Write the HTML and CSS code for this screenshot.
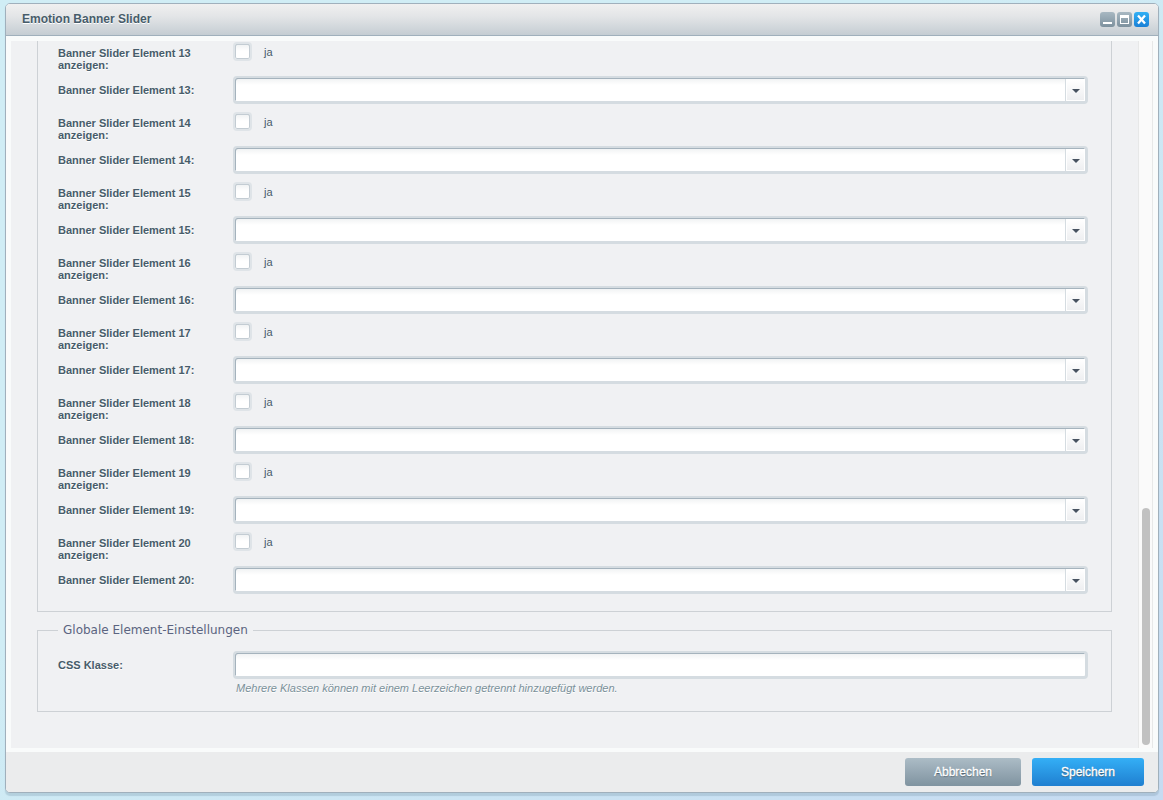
FILE: index.html
```html
<!DOCTYPE html>
<html lang="de">
<head>
  <meta charset="UTF-8">
  <title>Emotion Banner Slider</title>
  <meta name="viewport" content="width=device-width, initial-scale=1">
  <link rel="stylesheet" href="styles.css">
</head>
<body>
  <form class="window">
    <header class="window-header">
      <h1>Emotion Banner Slider</h1>
      <div class="tools">
        <button type="button" class="tool" aria-label="Minimieren">
          <svg width="15" height="15" viewBox="0 0 15 15"><path d="M3 10h9v2H3z" fill="#fff"/></svg>
        </button>
        <button type="button" class="tool" aria-label="Maximieren">
          <svg width="15" height="15" viewBox="0 0 15 15"><path fill-rule="evenodd" d="M3 3h9v9H3zM4 6v5h7V6z" fill="#fff"/></svg>
        </button>
        <button type="button" class="tool tool-close" aria-label="Schließen">
          <svg width="15" height="15" viewBox="0 0 15 15"><path d="M4 3.500l7 8M11 3.500l-7 8" stroke="#fff" stroke-width="2.300"/></svg>
        </button>
      </div>
    </header>

    <div class="window-body">
      <div class="content">
        <fieldset class="elements">
          <div class="row check-row">
            <label for="show13">Banner Slider Element 13 anzeigen:</label>
            <input type="checkbox" id="show13"><span>ja</span>
          </div>
          <div class="row">
            <label for="element13">Banner Slider Element 13:</label>
            <div class="combo"><select id="element13"></select></div>
          </div>
          <div class="row check-row">
            <label for="show14">Banner Slider Element 14 anzeigen:</label>
            <input type="checkbox" id="show14"><span>ja</span>
          </div>
          <div class="row">
            <label for="element14">Banner Slider Element 14:</label>
            <div class="combo"><select id="element14"></select></div>
          </div>
          <div class="row check-row">
            <label for="show15">Banner Slider Element 15 anzeigen:</label>
            <input type="checkbox" id="show15"><span>ja</span>
          </div>
          <div class="row">
            <label for="element15">Banner Slider Element 15:</label>
            <div class="combo"><select id="element15"></select></div>
          </div>
          <div class="row check-row">
            <label for="show16">Banner Slider Element 16 anzeigen:</label>
            <input type="checkbox" id="show16"><span>ja</span>
          </div>
          <div class="row">
            <label for="element16">Banner Slider Element 16:</label>
            <div class="combo"><select id="element16"></select></div>
          </div>
          <div class="row check-row">
            <label for="show17">Banner Slider Element 17 anzeigen:</label>
            <input type="checkbox" id="show17"><span>ja</span>
          </div>
          <div class="row">
            <label for="element17">Banner Slider Element 17:</label>
            <div class="combo"><select id="element17"></select></div>
          </div>
          <div class="row check-row">
            <label for="show18">Banner Slider Element 18 anzeigen:</label>
            <input type="checkbox" id="show18"><span>ja</span>
          </div>
          <div class="row">
            <label for="element18">Banner Slider Element 18:</label>
            <div class="combo"><select id="element18"></select></div>
          </div>
          <div class="row check-row">
            <label for="show19">Banner Slider Element 19 anzeigen:</label>
            <input type="checkbox" id="show19"><span>ja</span>
          </div>
          <div class="row">
            <label for="element19">Banner Slider Element 19:</label>
            <div class="combo"><select id="element19"></select></div>
          </div>
          <div class="row check-row">
            <label for="show20">Banner Slider Element 20 anzeigen:</label>
            <input type="checkbox" id="show20"><span>ja</span>
          </div>
          <div class="row">
            <label for="element20">Banner Slider Element 20:</label>
            <div class="combo"><select id="element20"></select></div>
          </div>
        </fieldset>

        <fieldset class="global">
          <legend>Globale Element-Einstellungen</legend>
          <div class="row">
            <label for="cssClass">CSS Klasse:</label>
            <div class="field">
              <input type="text" id="cssClass">
              <p class="help">Mehrere Klassen können mit einem Leerzeichen getrennt hinzugefügt werden.</p>
            </div>
          </div>
        </fieldset>
      </div>
      <div class="scrollbar"><div class="thumb"></div></div>
    </div>

    <footer class="window-footer">
      <button type="button" class="btn">Abbrechen</button>
      <button type="submit" class="btn btn-primary">Speichern</button>
    </footer>
  </form>
</body>
</html>
```
FILE: styles.css
```css
*, *::before, *::after {
  box-sizing: border-box;
}
body {
  margin: 0;
  padding: 3px 4px 7px 5px;
  min-height: 100vh;
  display: flex;
  background: linear-gradient(145deg, #d0edf5 40%, #c6dbf1);
  font-family: "Liberation Sans", Arial, sans-serif;
  font-size: 11px;
  line-height: 12px;
  color: #475c6a;
}
.window {
  flex: 1;
  display: flex;
  flex-direction: column;
  border: 1px solid #a0b0bc;
  border-radius: 5px;
  background: #f9fbfb;
  box-shadow: 0 3px 1px rgba(120, 150, 170, 0.3);
  overflow: hidden;
}
.window-header {
  display: flex;
  align-items: center;
  justify-content: space-between;
  height: 32px;
  padding: 0 9px 0 16px;
  border-bottom: 1px solid #a0b0bc;
  background: linear-gradient(#f0f0f0, #e3e5e7 40%, #c5cdd3);
}
h1 {
  margin: 0;
  padding-bottom: 2px;
  font-size: 12px;
  color: #475c6a;
  text-shadow: 0 1px 0 #fff;
}
.tools {
  display: flex;
  gap: 2px;
}
.tool {
  width: 15px;
  height: 15px;
  padding: 0;
  border: none;
  border-radius: 3px;
  background: linear-gradient(#a8b8c2, #7d919e);
}
.tool svg {
  display: block;
}
.tool-close {
  background: linear-gradient(#31b0f5, #1a80d6);
}

.window-body {
  flex: 1;
  display: flex;
  padding: 5px 5px 4px;
}
.content {
  flex: 1;
  padding: 0 26px;
  background: #f0f1f3;
}
fieldset {
  min-width: 0;
  margin: 0;
  padding: 0 23px 0 20px;
  border: 1px solid #cdd1d5;
}
.elements {
  border-top: none;
  padding-top: 1px;
  padding-bottom: 9px;
}
.global {
  margin-top: 11px;
  padding-bottom: 9px;
}
legend {
  padding: 0 5px;
  font-family: "DejaVu Sans", Verdana, sans-serif;
  font-size: 12px;
  line-height: 14px;
  color: #5b6480;
  margin-bottom: 14px;
}
.row {
  display: flex;
  align-items: flex-start;
  margin-bottom: 8px;
}
.row label {
  width: 175px;
  padding: 8px 36px 0 0;
  font-weight: bold;
  text-shadow: 0 1px 0 #fff;
}
.check-row {
  margin-bottom: 5px;
}
.check-row label {
  padding-top: 5px;
}
.check-row span {
  padding: 4px 0 0 12px;
}

.combo, .field {
  flex: 1;
  position: relative;
}
input, select {
  appearance: none;
  display: block;
  margin: 0;
  border: 2px solid #d5dce1;
  border-radius: 4px;
  background: linear-gradient(#eff1f2, #fff 7px);
  box-shadow: inset 1px 1px 0 #a5b3bd;
}
select, input[type="text"] {
  width: 100%;
  height: 28px;
  padding: 0 6px;
  border-width: 2px 3px 3px 2px;
}
input[type="checkbox"] {
  width: 19px;
  height: 19px;
  border-color: #dfe4e8;
  box-shadow: inset 0 0 0 1px #c3ccd3, inset 0 1px 0 #a5b3bd;
}
.combo::before {
  content: "";
  position: absolute;
  top: 3px;
  right: 3px;
  width: 19px;
  height: 22px;
  border: 1px solid #fff;
  box-shadow: -1px 0 0 #d5dce1;
  background: linear-gradient(#fff, #eeeff1);
  pointer-events: none;
}
.combo::after {
  content: "";
  position: absolute;
  top: 13px;
  right: 8px;
  border: 4px solid transparent;
  border-top-color: #475260;
  border-bottom: none;
  pointer-events: none;
}
.help {
  margin: 3px 0 0 3px;
  font-style: italic;
  color: #7a9099;
  text-shadow: 0 1px 0 #fff;
}

.scrollbar {
  width: 15px;
  display: flex;
  flex-direction: column;
  justify-content: flex-end;
  align-items: center;
  padding-bottom: 3px;
  border: solid #e7e8e8;
  border-width: 0 1px;
  background: #fafafa;
}
.thumb {
  width: 8px;
  height: 237px;
  border-radius: 4px;
  background: #c1c1c1;
}

.window-footer {
  display: flex;
  justify-content: flex-end;
  gap: 11px;
  height: 40px;
  padding: 6px 14px 0;
  background: #ebeced;
}
.btn {
  width: 116px;
  height: 28px;
  padding: 0;
  border: none;
  border-radius: 3px;
  background: linear-gradient(#acbcc6, #7f93a0);
  color: #fff;
  font-family: inherit;
  font-size: 12px;
  -webkit-text-stroke: 0.3px #fff;
  text-shadow: 0 1px 1px #475c6a;
}
.btn-primary {
  width: 112px;
  background: linear-gradient(#34aff6, #1f7fd0);
}
```
